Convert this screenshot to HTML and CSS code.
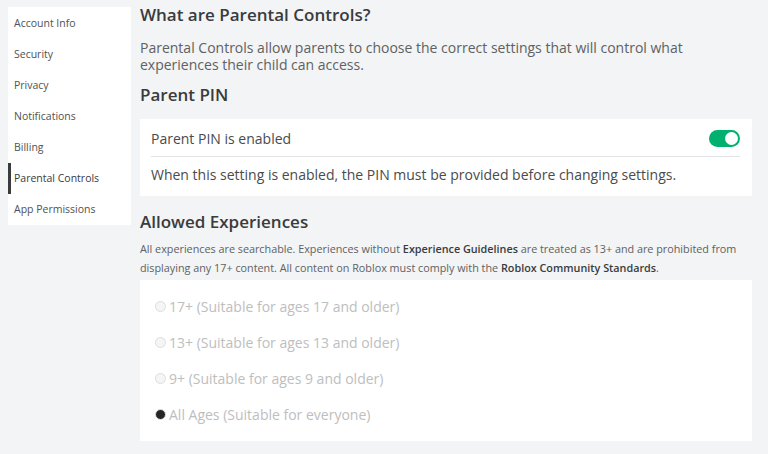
FILE: index.html
```html
<!DOCTYPE html>
<html lang="en">
<head>
<meta charset="utf-8">
<title>Parental Controls</title>
<link rel="stylesheet" href="styles.css">
</head>
<body>
<div class="page">
  <nav class="sidebar">
    <a class="nav-item">Account Info</a>
    <a class="nav-item">Security</a>
    <a class="nav-item">Privacy</a>
    <a class="nav-item">Notifications</a>
    <a class="nav-item">Billing</a>
    <a class="nav-item active">Parental Controls</a>
    <a class="nav-item">App Permissions</a>
  </nav>
  <main class="main">
    <h1 class="title">What are Parental Controls?</h1>
    <p class="desc">Parental Controls allow parents to choose the correct settings that will control what experiences their child can access.</p>
    <h2 class="title section-title">Parent PIN</h2>
    <section class="card pin-card">
      <div class="pin-row">
        <span class="pin-label">Parent PIN is enabled</span>
        <span class="toggle"><span class="knob"></span></span>
      </div>
      <div class="divider"></div>
      <p class="pin-note">When this setting is enabled, the PIN must be provided before changing settings.</p>
    </section>
    <h2 class="title section-title2">Allowed Experiences</h2>
    <p class="small">All experiences are searchable. Experiences without <b>Experience Guidelines</b> are treated as 13+ and are prohibited from displaying any 17+ content. All content on Roblox must comply with the <b>Roblox Community Standards</b>.</p>
    <section class="card radio-card">
      <div class="radio-row"><span class="radio"></span><span class="radio-label">17+ (Suitable for ages 17 and older)</span></div>
      <div class="radio-row"><span class="radio"></span><span class="radio-label">13+ (Suitable for ages 13 and older)</span></div>
      <div class="radio-row"><span class="radio"></span><span class="radio-label">9+ (Suitable for ages 9 and older)</span></div>
      <div class="radio-row"><span class="radio checked"></span><span class="radio-label">All Ages (Suitable for everyone)</span></div>
    </section>
  </main>
</div>
</body>
</html>
```
FILE: styles.css
```css
* { box-sizing: border-box; }
html, body { margin: 0; padding: 0; }
body {
  background: #f2f4f5;
  font-family: "Open Sans", "Liberation Sans", sans-serif;
  color: #393b3d;
  width: 768px;
  height: 454px;
  overflow: hidden;
}
.page {
  display: flex;
  align-items: flex-start;
  padding-left: 8px;
  gap: 9px;
}
.sidebar {
  margin-top: 7px;
  padding-top: 1px;
  width: 123px;
  background: #fff;
  display: flex;
  flex-direction: column;
}
.nav-item {
  height: 31px;
  line-height: 31px;
  padding-left: 3px;
  font-size: 10.5px;
  font-weight: 500;
  color: #505152;
  border-left: 3px solid transparent;
}
.nav-item.active { border-left-color: #393b3d; color: #393b3d; }
.main {
  width: 612px;
  padding-top: 4px;
}
.title {
  margin: 0;
  font-size: 17px;
  line-height: 22px;
  font-weight: 600;
  color: #393b3d;
}
.desc {
  margin: 13px 0 0;
  font-size: 14px;
  line-height: 17px;
  color: #606162;
}
.section-title { margin-top: 11px; }
.section-title2 { margin-top: 15px; }
.card { background: #fff; }
.pin-card {
  margin-top: 13px;
  padding: 0 12px 0 11px;
}
.pin-row {
  display: flex;
  align-items: center;
  justify-content: space-between;
  height: 37px;
  padding-top: 1px;
}
.pin-label { font-size: 14px; color: #4a4b4c; }
.toggle {
  position: relative;
  width: 31px;
  height: 17px;
  border-radius: 9px;
  background: #00b06f;
}
.knob {
  position: absolute;
  right: 2px;
  top: 2px;
  width: 13px;
  height: 13px;
  border-radius: 50%;
  background: #fff;
}
.divider { height: 1px; background: #e3e4e5; }
.pin-note {
  margin: 0;
  padding: 8px 0 11px;
  font-size: 14px;
  line-height: 20px;
  color: #4a4b4c;
}
.small {
  margin: 6px 0 0;
  font-size: 10.8px;
  line-height: 19px;
  color: #606162;
}
.small b { font-weight: 600; color: #393b3d; }
.radio-card {
  margin-top: 3px;
  padding: 8px 15px 9px;
}
.radio-row {
  height: 36px;
  display: flex;
  align-items: center;
  gap: 3px;
}
.radio {
  width: 11px;
  height: 11px;
  border-radius: 50%;
  border: 1px solid #dcdddd;
  background: #f5f5f5;
  display: inline-block;
}
.radio.checked {
  background: #232527;
  border: 1px solid #e6e6e6;
}
.radio-label {
  font-size: 14px;
  color: #bdbebe;
}
```
